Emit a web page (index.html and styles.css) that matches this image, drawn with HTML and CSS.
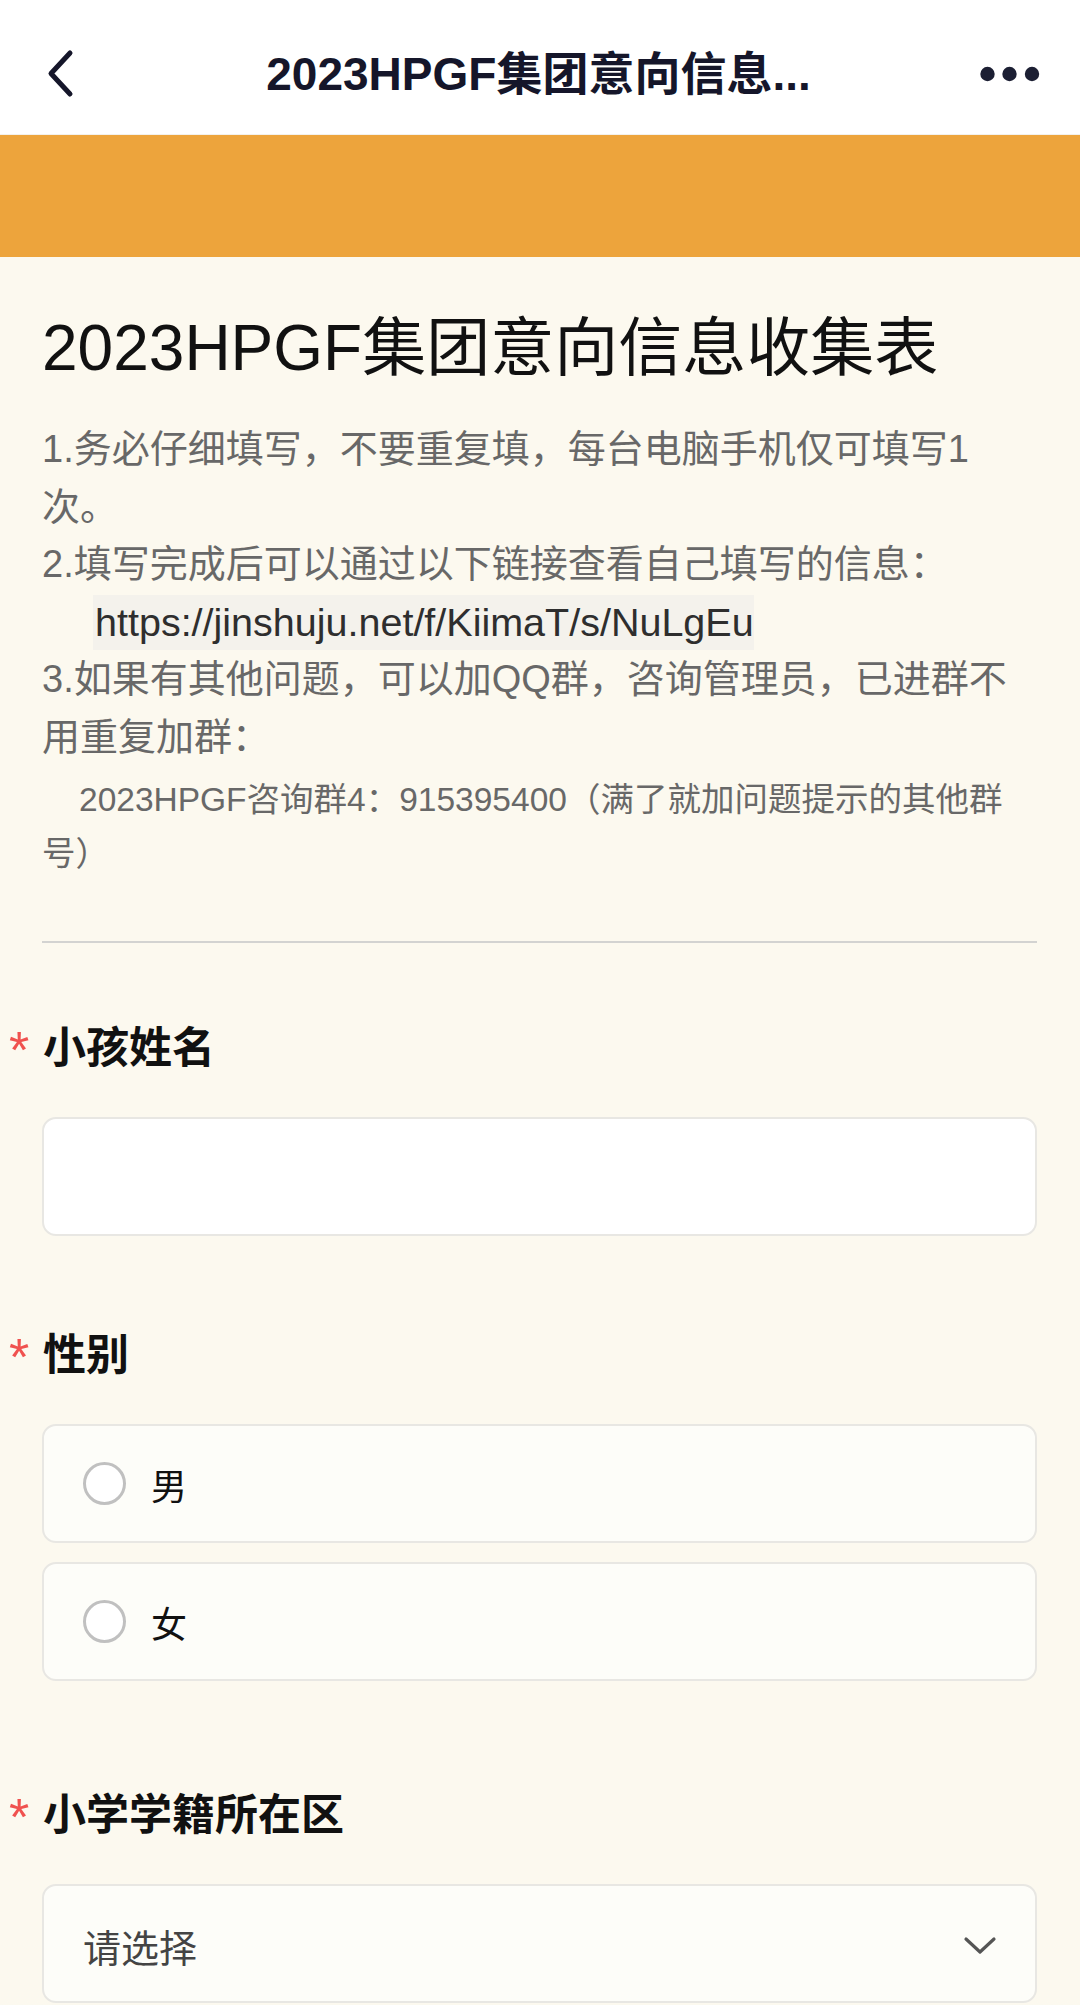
FILE: index.html
```html
<!DOCTYPE html>
<html lang="zh-CN">
<head>
<meta charset="utf-8">
<title>2023HPGF集团意向信息收集表</title>
<link rel="stylesheet" href="styles.css">
</head>
<body>
<header class="nav">
  <button class="nav-btn nav-back" aria-label="返回">
    <svg width="30" height="50" viewBox="0 0 30 50"><path d="M23 4 L4 24.5 L23 45" fill="none" stroke="#15162a" stroke-width="5" stroke-linecap="round" stroke-linejoin="round"/></svg>
  </button>
  <h1 class="nav-title">2023HPGF集团意向信息...</h1>
  <button class="nav-btn nav-more" aria-label="更多">
    <svg width="60" height="16" viewBox="0 0 60 16"><circle cx="7.5" cy="8" r="7.2" fill="#1c1f33"/><circle cx="29.5" cy="8" r="7.2" fill="#1c1f33"/><circle cx="52" cy="8" r="7.2" fill="#1c1f33"/></svg>
  </button>
</header>
<div class="banner"></div>
<main class="form">
  <h2 class="form-title">2023HPGF集团意向信息收集表</h2>
  <div class="form-desc">
    <p>1.务必仔细填写，不要重复填，每台电脑手机仅可填写1次。</p>
    <p>2.填写完成后可以通过以下链接查看自己填写的信息：</p>
    <p class="link-line"><span class="link">https://jinshuju.net/f/KiimaT/s/NuLgEu</span></p>
    <p>3.如果有其他问题，可以加QQ群，咨询管理员，已进群不用重复加群：</p>
    <p class="small">2023HPGF咨询群4：915395400（满了就加问题提示的其他群号）</p>
  </div>
  <hr class="divider">
  <section class="field">
    <div class="field-label"><span class="req">*</span>小孩姓名</div>
    <div class="input"></div>
  </section>
  <section class="field">
    <div class="field-label"><span class="req">*</span>性别</div>
    <div class="options">
      <div class="option"><span class="radio"></span><span class="option-text">男</span></div>
      <div class="option"><span class="radio"></span><span class="option-text">女</span></div>
    </div>
  </section>
  <section class="field">
    <div class="field-label"><span class="req">*</span>小学学籍所在区</div>
    <div class="select">
      <span class="placeholder">请选择</span>
      <svg class="chev" width="34" height="20" viewBox="0 0 34 20"><path d="M3 3 L17 16 L31 3" fill="none" stroke="#555" stroke-width="3.2" stroke-linecap="round" stroke-linejoin="round"/></svg>
    </div>
  </section>
</main>
</body>
</html>
```
FILE: styles.css
```css
* { box-sizing: border-box; }
html, body { margin: 0; padding: 0; }
body {
  background: #fcf9ef;
  font-family: "Liberation Sans", "Noto Sans CJK SC", sans-serif;
  color: #111;
}
.nav {
  height: 135px;
  padding: 13px 20px 0 47px;
  background: #fff;
  display: flex;
  align-items: center;
  justify-content: space-between;
  border-bottom: 1px solid #f3f1ec;
}
.nav-btn {
  border: 0;
  background: none;
  padding: 0;
  display: flex;
  align-items: center;
}
.nav-back { width: 30px; }
.nav-more { width: 80px; justify-content: flex-start; padding-left: 0; }
.nav-title {
  margin: 0;
  font-size: 46px;
  font-weight: 600;
  line-height: 60px;
  color: #15162a;
  white-space: nowrap;
  margin-left: 20px;
}
.banner {
  height: 122px;
  background: #eda43c;
}
.form {
  padding: 0 43px 0 42px;
}
.form-title {
  margin: 51px 0 0;
  font-size: 64px;
  font-weight: 400;
  line-height: 80px;
  color: #111;
}
.form-desc {
  margin-top: 33px;
  font-size: 38px;
  line-height: 57.5px;
  color: #686868;
}
.form-desc p { margin: 0; }
.link-line {
  height: 57.5px;
  display: flex;
  align-items: center;
  padding-left: 51px;
}
.link {
  font-size: 39.5px;
  line-height: 55px;
  padding-left: 2px;
  background: #f4f2ec;
  color: #2e2e2e;
}
.form-desc .small {
  margin-top: 7px;
  font-size: 33.5px;
  line-height: 54px;
  text-indent: 37px;
}
.divider {
  margin: 60px 0 0;
  border: 0;
  height: 2px;
  background: #d3d3d1;
}
.field { padding-top: 75px; }
.field + .field { padding-top: 89px; }
.field-label {
  display: flex;
  align-items: flex-start;
  height: 60px;
  padding-left: 3px;
  font-size: 43px;
  line-height: 60px;
  font-weight: 700;
  color: #111;
  margin-bottom: 39px;
}
.req {
  width: 34px;
  margin-left: -36px;
  padding-left: 0;
  padding-top: 2px;
  font-size: 52px;
  font-weight: 400;
  color: #f0524f;
}
.input {
  height: 119px;
  background: #fff;
  border: 2px solid #e8e7e3;
  border-radius: 14px;
}
.options {
  display: flex;
  flex-direction: column;
  gap: 19px;
  padding-bottom: 15px;
}
.option {
  height: 119px;
  background: #fdfdf9;
  border: 2px solid #e8e7e3;
  border-radius: 14px;
  display: flex;
  align-items: center;
  padding-left: 39px;
}
.radio {
  width: 43px;
  height: 43px;
  border-radius: 50%;
  border: 3px solid #c0c0c0;
  background: #fff;
  flex: none;
}
.option-text {
  margin-left: 25px;
  font-size: 36px;
  color: #111;
}
.select {
  height: 119px;
  background: #fdfdf9;
  border: 2px solid #e8e7e3;
  border-radius: 14px;
  display: flex;
  align-items: center;
  justify-content: space-between;
  padding: 4px 38px 0 39px;
}
.placeholder {
  font-size: 38px;
  color: #444;
}
.chev { flex: none; }
```
